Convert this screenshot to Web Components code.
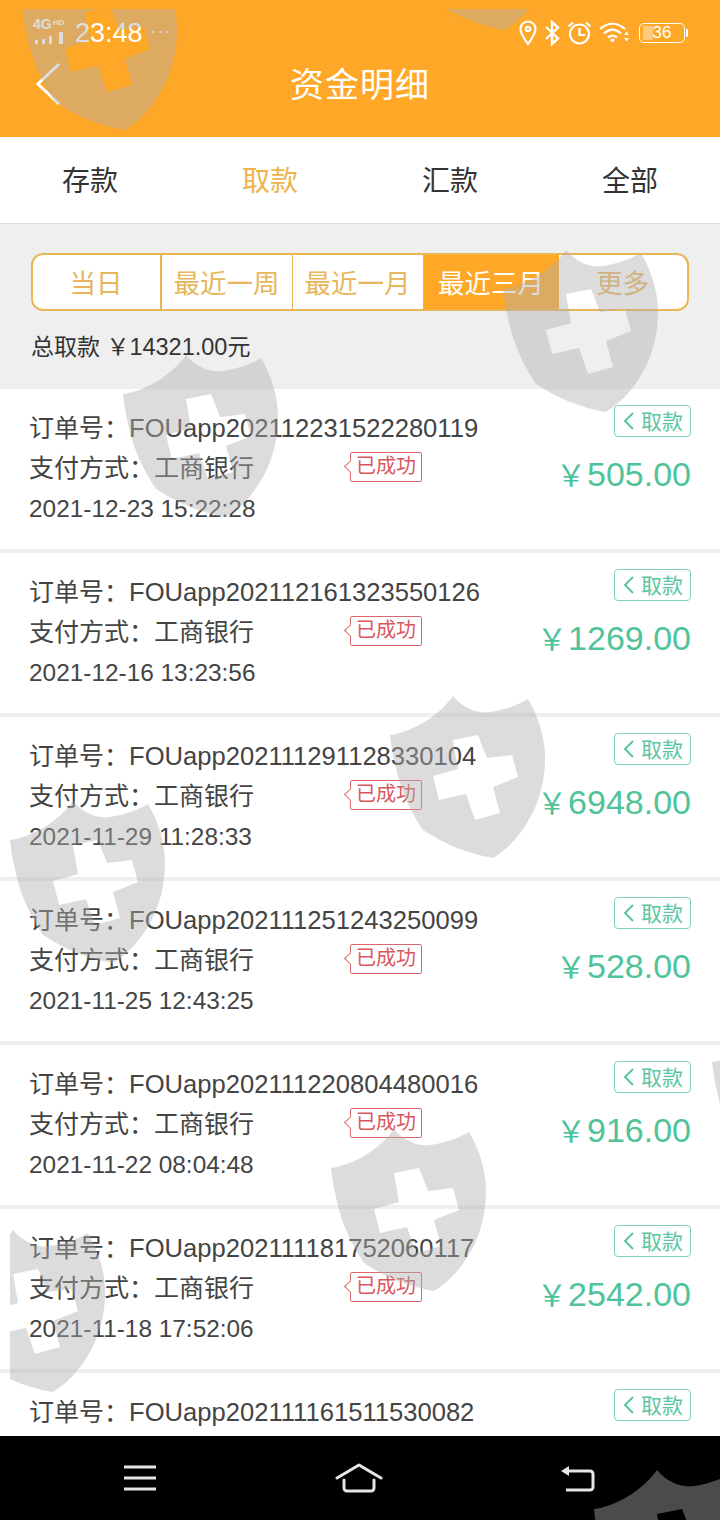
<!DOCTYPE html>
<html lang="zh">
<head>
<meta charset="utf-8">
<title>资金明细</title>
<style>
	html, body { margin: 0; padding: 0; background: #efefef; }
	body { font-family: "Liberation Sans", "Noto Sans CJK SC", sans-serif; }
</style>
</head>
<body>
<money-page>
	<status-strip slot="top"></status-strip>
	<tab-strip>
		<tab-item>存款</tab-item>
		<tab-item active>取款</tab-item>
		<tab-item>汇款</tab-item>
		<tab-item>全部</tab-item>
	</tab-strip>
	<range-filter>
		<range-item>当日</range-item>
		<range-item>最近一周</range-item>
		<range-item>最近一月</range-item>
		<range-item active>最近三月</range-item>
		<range-item>更多</range-item>
		<span slot="total">总取款 ￥</span><total-sum slot="total">14321.00</total-sum><span slot="total">元</span>
	</range-filter>
	<order-list></order-list>
</money-page>

<script>
const FONT = `"Liberation Sans", "Noto Sans CJK SC", sans-serif`;

class MoneyPage extends HTMLElement {
	constructor() {
		super();
		this.attachShadow({ mode: "open" }).innerHTML = `
			<style>
				:host { display: block; position: relative; width: 720px; height: 1520px; overflow: hidden; font-family: ${FONT}; }
				.page { display: flex; flex-direction: column; height: 100%; }
				.content { flex: 1; min-height: 0; overflow: hidden; display: flex; flex-direction: column; }
				.head { background: #ffa726; height: 137px; flex: none; display: flex; flex-direction: column; }
				::slotted(*) { flex: none; }
			</style>
			<div class="page">
				<div class="head">
					<slot name="top"></slot>
					<title-bar>资金明细</title-bar>
				</div>
				<div class="content"><slot></slot></div>
				<nav-keys></nav-keys>
			</div>
			<shield-layer></shield-layer>`;
	}
}

class StatusStrip extends HTMLElement {
	constructor() {
		super();
		this.attachShadow({ mode: "open" }).innerHTML = `
			<style>
				:host { display: block; height: 56px; color: #fff; }
				.bar { display: flex; align-items: center; justify-content: space-between; padding: 12px 35px 0 31px; height: 42px; }
				.side { display: flex; align-items: center; }
				.net { position: relative; width: 34px; height: 28px; margin-right: 10px; }
				.net b { position: absolute; left: 2px; top: -2px; font-size: 14px; line-height: 14px; font-weight: 700; }
				.net i { position: absolute; left: 22px; top: 0; font-size: 8px; line-height: 8px; font-style: normal; font-weight: 700; }
				.net svg { position: absolute; left: 2px; top: 12px; }
				.time { font-size: 27px; line-height: 32px; }
				.dots { font-size: 18px; letter-spacing: 1px; margin-left: 8px; position: relative; top: -2px; }
				.icons { gap: 7px; }
				.wifi { margin-right: -1px; }
				.bat { width: 46px; height: 20px; box-sizing: border-box; border: 1px solid #fff; border-radius: 5px; position: relative; font-size: 17px; line-height: 18px; text-align: center; margin-left: 3px; }
				.bat::before { content: ""; position: absolute; left: 3px; top: 2px; bottom: 2px; width: 10px; background: rgba(255,255,255,.4); }
				.bat::after { content: ""; position: absolute; right: -4px; top: 5px; width: 2px; height: 8px; background: #fff; border-radius: 1px; }
			</style>
			<div class="bar">
				<div class="side">
					<div class="net">
						<b>4G</b><i>HD</i>
						<svg width="32" height="14" viewBox="0 0 32 14" fill="#fff">
							<rect x="2" y="9" width="3" height="4"/><rect x="9" y="8" width="3" height="5"/><rect x="16" y="5" width="3" height="8"/><rect x="26" y="1" width="4" height="12"/>
						</svg>
					</div>
					<span class="time">23:48</span><span class="dots">···</span>
				</div>
				<div class="side icons">
					<svg width="18" height="26" viewBox="0 0 18 26" fill="none" stroke="#fff" stroke-width="2.2">
						<path d="M9 24C5 18 1.5 14 1.5 9a7.5 7.5 0 0 1 15 0c0 5-3.500 9-7.500 15z"/><circle cx="9" cy="9" r="2.200"/>
					</svg>
					<svg width="16" height="26" viewBox="0 0 16 26" fill="none" stroke="#fff" stroke-width="2.400">
						<path d="M2 7l12 11.500-6 5.500V2l6 5.500L2 19"/>
					</svg>
					<svg width="25" height="26" viewBox="0 0 25 26" fill="none" stroke="#fff" stroke-width="2.200">
						<circle cx="12.500" cy="14" r="9.500"/><path d="M12.500 8v7h5.500"/><path d="M1.500 6.500l4.500-4M23.500 6.500l-4.500-4"/>
					</svg>
					<svg class="wifi" width="31" height="24" viewBox="0 0 31 24" fill="none" stroke="#fff" stroke-width="2.200">
						<path d="M1 8c8-7 17-7 25 0M5 12.500c5.500-5 11.500-5 17 0M9 16.500c3-2.500 6-2.500 9 0"/>
						<path d="M11 19l2.500-2 2.500 2-2.500 2.500z" fill="#fff" stroke="none"/>
						<path d="M25 14l2.500-3.500 2.500 3.500zM25 17l2.500 3.500L30 17z" fill="#fff" stroke="none"/>
					</svg>
					<div class="bat">36</div>
				</div>
			</div>`;
	}
}

class TitleBar extends HTMLElement {
	constructor() {
		super();
		this.attachShadow({ mode: "open" }).innerHTML = `
			<style>
				:host { display: block; position: relative; flex: 1; text-align: center; color: #fff; font-size: 34px; line-height: 58px; }
				svg { position: absolute; left: 35px; top: 6px; }
				div { letter-spacing: 1px; }
			</style>
			<svg width="28" height="44" viewBox="0 0 28 44" fill="none" stroke="#fff" stroke-width="3">
				<path d="M24 2L3 22l21 20"/>
			</svg>
			<div><slot></slot></div>`;
	}
}

class TabStrip extends HTMLElement {
	constructor() {
		super();
		this.attachShadow({ mode: "open" }).innerHTML = `
			<style>
				:host { display: grid; grid-template-columns: repeat(4, 1fr); height: 87px; padding-bottom: 2px; box-sizing: border-box; background: #fff; border-bottom: 1px solid #dcdcdc; }
			</style>
			<slot></slot>`;
	}
}

class TabItem extends HTMLElement {
	constructor() {
		super();
		this.attachShadow({ mode: "open" }).innerHTML = `
			<style>
				:host { display: flex; align-items: center; justify-content: center; font-size: 28px; color: #333; }
				:host([active]) { color: #ecb449; }
			</style>
			<slot></slot>`;
	}
}

class RangeFilter extends HTMLElement {
	constructor() {
		super();
		this.attachShadow({ mode: "open" }).innerHTML = `
			<style>
				:host { display: block; height: 165px; box-sizing: border-box; padding: 29px 31px 0; background: #efefef; }
				.group { display: grid; grid-template-columns: 129px 131px 131px 135px 1fr; height: 58px; box-sizing: border-box; border: 2px solid #e9b655; border-radius: 12px; overflow: hidden; background: #fff; }
				.total { margin: 20px 0 0; font-size: 23px; line-height: 32px; color: #333; }
			</style>
			<div class="group"><slot></slot></div>
			<div class="total"><slot name="total"></slot></div>`;
	}
}

class RangeItem extends HTMLElement {
	constructor() {
		super();
		this.attachShadow({ mode: "open" }).innerHTML = `
			<style>
				:host { display: flex; align-items: center; justify-content: center; font-size: 26.500px; padding: 0 1px 2px 0; color: #e8b65c; border-right: 1px solid #e9b655; }
				:host(:first-child) { border-right-width: 2px; }
				:host(:last-of-type) { border-right: 0; }
				:host([active]) { background: #ffa726; color: #fff; border-right: 0; }
			</style>
			<slot></slot>`;
	}
}

class TotalSum extends HTMLElement {
	constructor() {
		super();
		// no whitespace around the slot, it would show as a gap in the line
		this.attachShadow({ mode: "open" }).innerHTML = `<style>:host { display: inline; font-size: 23.500px; }</style><slot></slot>`;
	}
}

class OrderList extends HTMLElement {
	constructor() {
		super();
		// same list the screen shows, newest first
		this.orders = [
			["FOUapp202112231522280119", "2021-12-23 15:22:28", "505.00"],
			["FOUapp202112161323550126", "2021-12-16 13:23:56", "1269.00"],
			["FOUapp202111291128330104", "2021-11-29 11:28:33", "6948.00"],
			["FOUapp202111251243250099", "2021-11-25 12:43:25", "528.00"],
			["FOUapp202111220804480016", "2021-11-22 08:04:48", "916.00"],
			["FOUapp202111181752060117", "2021-11-18 17:52:06", "2542.00"],
			["FOUapp202111161511530082", "", ""],
		];
		this.attachShadow({ mode: "open" }).innerHTML = `
			<style>
				:host { display: flex; flex-direction: column; gap: 4px; background: #efefef; }
			</style>`;
		for (const [no, date, amount] of this.orders) {
			const row = document.createElement("order-row");
			row.setAttribute("no", no);
			row.setAttribute("date", date);
			row.setAttribute("amount", amount);
			this.shadowRoot.appendChild(row);
		}
	}
}

class OrderRow extends HTMLElement {
	connectedCallback() {
		const no = this.getAttribute("no");
		const date = this.getAttribute("date");
		const amount = this.getAttribute("amount");
		// the last row runs under the key bar, only its first line shows
		this.attachShadow({ mode: "open" }).innerHTML = `
			<style>
				:host { display: flex; justify-content: space-between; flex: none; height: 160px; box-sizing: border-box; padding: 19px 29px 0 29px; background: #fff; color: #444; }
				.info { font-size: 25px; line-height: 40px; }
				.no { white-space: nowrap; }
				.no span { font-size: 25.600px; }
				.pay { display: flex; align-items: center; height: 40px; white-space: nowrap; }
				.pay > span { width: 321px; }
				.date { font-size: 24.400px; white-space: nowrap; position: relative; top: 1px; }
				.side { display: flex; flex-direction: column; align-items: flex-end; }
				.amount { margin-top: 19px; font-size: 34px; line-height: 36px; color: #4fc39a; white-space: nowrap; }
				.amount i { font-style: normal; font-size: 30px; margin-right: 1px; }
				order-tag[kind="type"] { margin-top: -3px; }
			</style>
			<div class="info">
				<div class="no">订单号：<span>${no}</span></div>
				${date ? `<div class="pay"><span>支付方式：工商银行</span><order-tag kind="state">已成功</order-tag></div>
				<div class="date">${date}</div>` : `<div class="pay"><span></span><order-tag kind="state"></order-tag></div>`}
			</div>
			<div class="side">
				<order-tag kind="type">取款</order-tag>
				${amount ? `<div class="amount"><i>￥</i>${amount}</div>` : ""}
			</div>`;
	}
}

class OrderTag extends HTMLElement {
	constructor() {
		super();
		this.attachShadow({ mode: "open" }).innerHTML = `
			<style>
				:host { display: inline-flex; align-items: center; box-sizing: border-box; position: relative; }
				:host([kind="type"]) { width: 77px; height: 32px; border: 1px solid #7fd4b6; border-radius: 4px; color: #5cc5a0; font-size: 21px; padding-left: 8px; gap: 7px; }
				:host([kind="state"]) { width: 72px; height: 30px; border: 1px solid #d9676b; border-radius: 2px; color: #d9575c; font-size: 20px; justify-content: center; margin-top: -3px; }
				:host([kind="state"])::before { content: ""; position: absolute; left: -5px; top: 9px; width: 8px; height: 8px; background: #fff; border-left: 1px solid #d9676b; border-bottom: 1px solid #d9676b; transform: rotate(45deg); }
				svg { display: none; }
				:host([kind="type"]) svg { display: block; }
				span { position: relative; top: -1px; }
			</style>
			<svg width="11" height="20" viewBox="0 0 11 20" fill="none" stroke="#5cc5a0" stroke-width="2"><path d="M10 2L2 10l8 8"/></svg>
			<span><slot></slot></span>`;
	}
}

class NavKeys extends HTMLElement {
	constructor() {
		super();
		this.attachShadow({ mode: "open" }).innerHTML = `
			<style>
				:host { display: flex; justify-content: space-between; align-items: center; flex: none; height: 84px; padding: 0 124px 0 123px; box-sizing: border-box; background: #000; position: relative; z-index: 1; }
				svg { display: block; }
			</style>
			<svg width="34" height="26" viewBox="0 0 34 26" fill="none" stroke="#e6e6e6" stroke-width="3"><path d="M1 2h32M1 13h32M1 24h32"/></svg>
			<svg width="48" height="30" viewBox="0 0 48 30" fill="none" stroke="#e6e6e6" stroke-width="3" stroke-linecap="round" stroke-linejoin="round"><path d="M2 15L24 2l22 13"/><path d="M9 17v8a3 3 0 0 0 3 3h24a3 3 0 0 0 3-3v-8"/></svg>
			<svg width="36" height="28" viewBox="0 0 36 28" fill="none" stroke="#e6e6e6" stroke-width="3"><path d="M4 7h26a3 3 0 0 1 3 3v13a3 3 0 0 1-3 3H6"/><path d="M1 7l8-5v10z" fill="#e6e6e6" stroke="none"/></svg>`;
	}
}

// the grey shields lie over the whole screen, so they are placed by coordinates
// the layer starts at 10,9: the shields get cut off there in the screenshot too
class ShieldLayer extends HTMLElement {
	constructor() {
		super();
		this.spots = [
			[12, -38], [392, -138], [113, 349], [493, 244], [380, 690],
			[0, 795], [321, 1123], [-60, 1224], [702, 1017], [584, 1464],
		];
		this.attachShadow({ mode: "open" }).innerHTML = `
			<style>
				:host { display: block; position: absolute; left: 10px; right: 0; top: 9px; bottom: 0; overflow: hidden; pointer-events: none; z-index: 2; }
				svg { position: absolute; }
			</style>`;
		for (const [x, y] of this.spots) {
			this.shadowRoot.innerHTML += `
				<svg style="left:${x - 10}px;top:${y - 9}px" width="180" height="180" viewBox="0 0 180 180">
					<path fill="rgba(173,173,173,.43)" fill-rule="evenodd" d="M73 6C83 18 97 24 110 22C124 20 138 15 148 9C159 28 166 50 165 73C164 95 158 115 147 133C138 148 126 160 113 168C89 164 66 155 43 140C31 122 22 103 17 83C14 70 11 57 10 45C20 44 32 39 43 33C56 25 66 16 73 6ZM73 50L98 45L107 68L132 65L138 87L113 97L120 123L95 130L86 104L59 110L53 86L78 79Z"/>
				</svg>`;
		}
	}
}

customElements.define("status-strip", StatusStrip);
customElements.define("title-bar", TitleBar);
customElements.define("tab-strip", TabStrip);
customElements.define("tab-item", TabItem);
customElements.define("range-filter", RangeFilter);
customElements.define("range-item", RangeItem);
customElements.define("total-sum", TotalSum);
customElements.define("order-tag", OrderTag);
customElements.define("order-row", OrderRow);
customElements.define("order-list", OrderList);
customElements.define("nav-keys", NavKeys);
customElements.define("shield-layer", ShieldLayer);
customElements.define("money-page", MoneyPage);
</script>
</body>
</html>
